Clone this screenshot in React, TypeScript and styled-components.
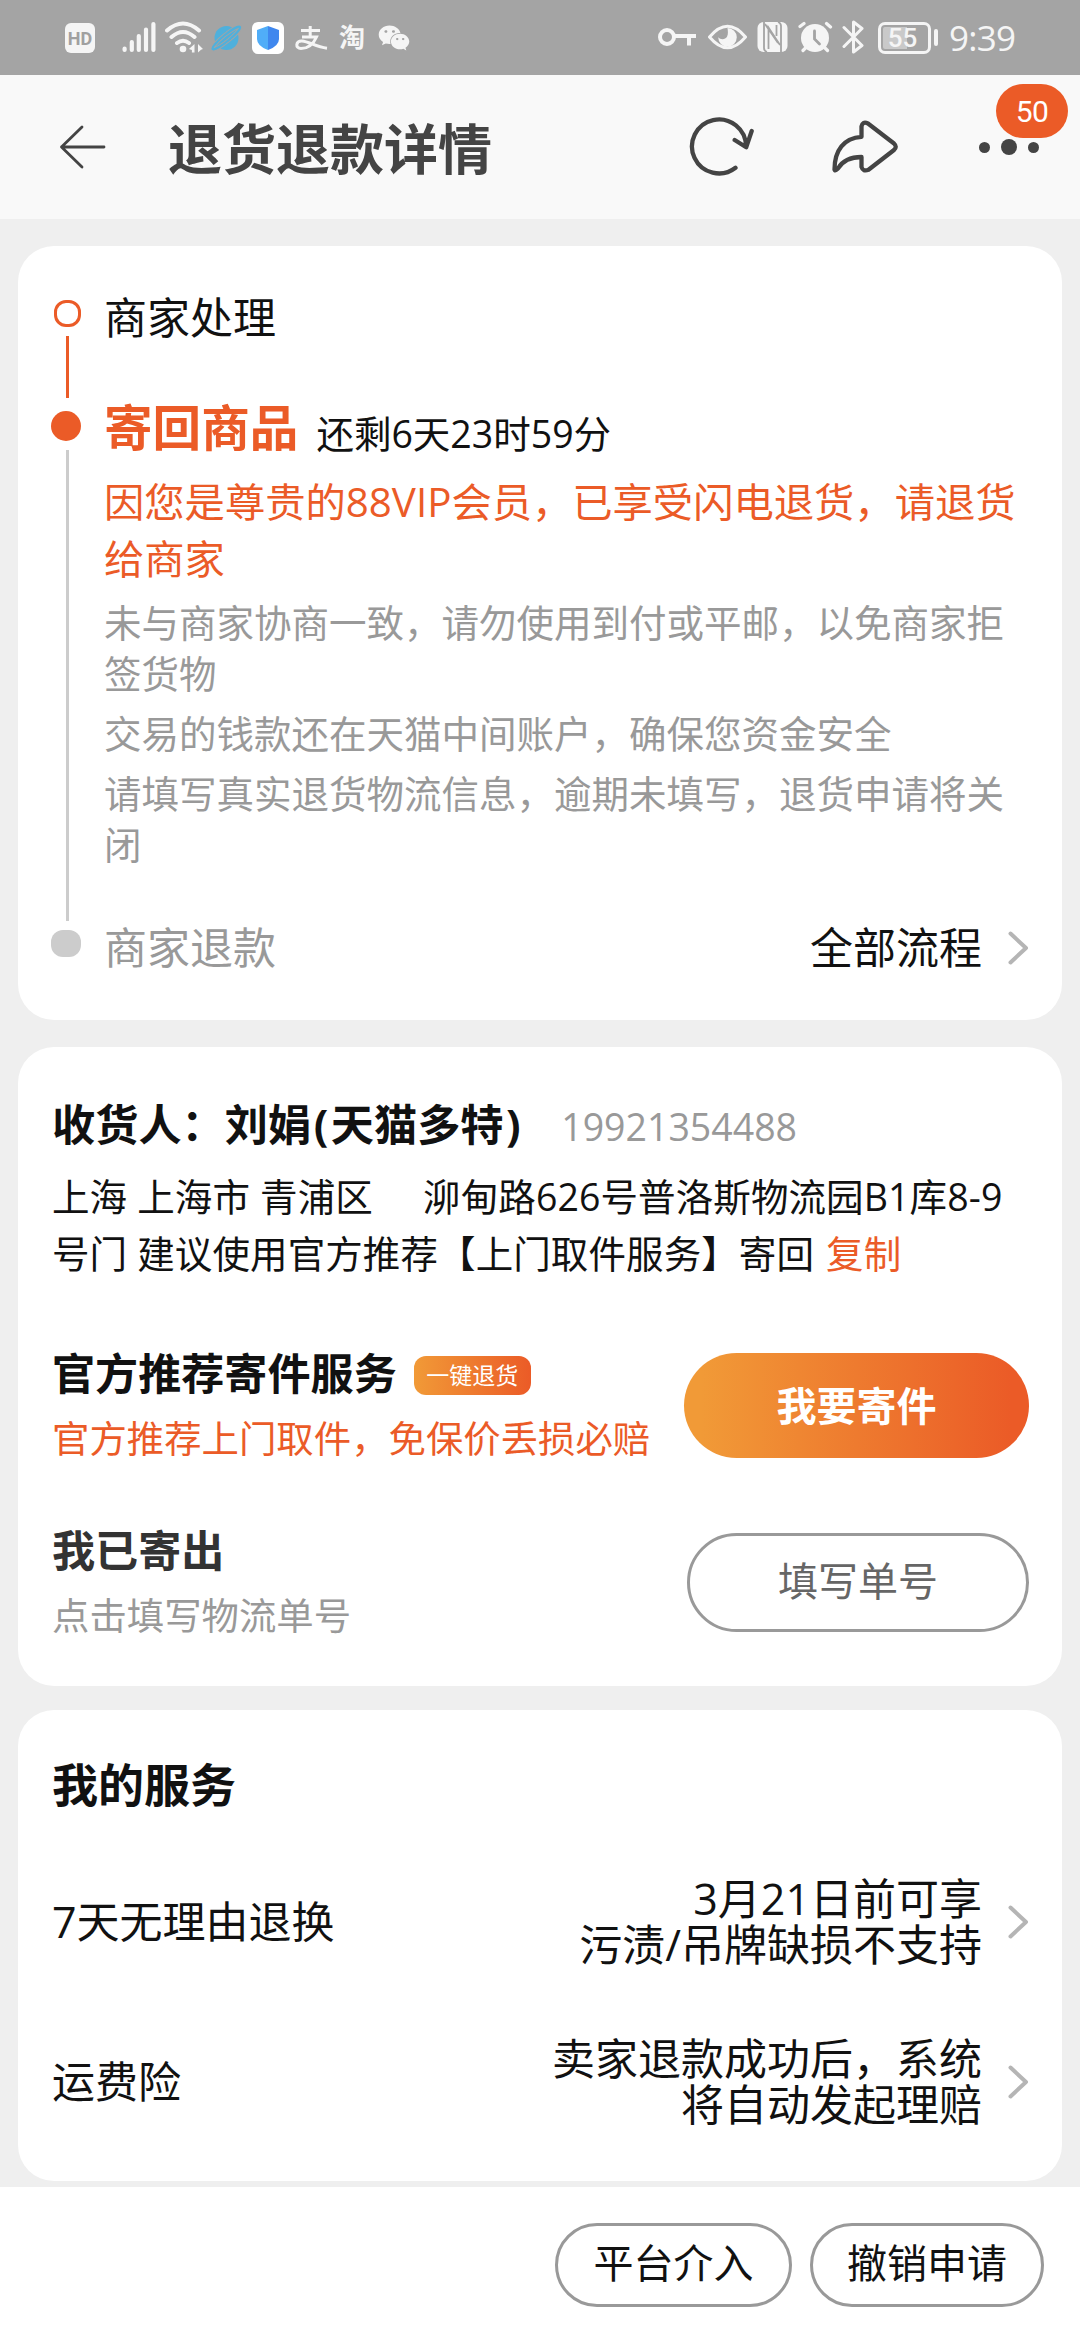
import React from "react";
import styled, { createGlobalStyle } from "styled-components";
import { FaWeixin } from "react-icons/fa";

const ORANGE = "#eb5b27";
const INK = "#111";
const MUTED = "#999";
const STATUS = "#f5f5f5";

const GlobalStyle = createGlobalStyle`
  * { box-sizing: border-box; }
  body { margin: 0; background: #efefef; }
  button { font: inherit; padding: 0; cursor: pointer; }
  p, h1, h2 { margin: 0; font-weight: 400; }
`;

const Screen = styled.div`
  width: 1080px;
  height: 2340px;
  display: flex;
  flex-direction: column;
  overflow: hidden;
  background: #efefef;
  color: ${INK};
  font-family: "Open Sans", "Noto Sans CJK SC", sans-serif;
`;

/* ---------- status bar ---------- */

const StatusBar = styled.header`
  height: 75px;
  flex: none;
  display: flex;
  justify-content: space-between;
  padding: 0 64px 0 65px;
  background: #a4a4a4;
  color: ${STATUS};
`;

const StatusGroup = styled.div`
  display: flex;
  align-items: center;
`;

const StatusIcon = styled.svg<{ $gap?: number }>`
  display: block;
  flex: none;
  height: 75px;
  margin-left: ${(p) => p.$gap ?? 0}px;
`;

const HdChip = styled.span`
  width: 30px;
  height: 30px;
  border-radius: 6px;
  background: ${STATUS};
  color: #a0a0a0;
  font: 700 18px/31px Roboto, sans-serif;
  text-align: center;
`;

const TaoMark = styled.span`
  margin-left: 11px;
  font-size: 26px;
  line-height: 75px;
  font-weight: 700;
`;

const WechatMark = styled(FaWeixin)`
  margin-left: 13px;
  width: 32px;
  height: 32px;
`;

const Battery = styled.span`
  width: 53px;
  height: 32px;
  margin-left: 13px;
  border: 3px solid ${STATUS};
  border-radius: 7px;
  padding: 2px;
  display: flex;
`;

const BatteryFill = styled.span`
  width: 100%;
  border-radius: 2px;
  background: linear-gradient(90deg, #c9c9c9 55%, transparent 55%);
  font: 500 26px/23px Roboto, sans-serif;
  text-align: center;
  padding-right: 4px;
`;

const BatteryTip = styled.span`
  width: 4px;
  height: 17px;
  margin-left: 3px;
  border-radius: 2px;
  background: ${STATUS};
`;

const Clock = styled.span`
  margin-left: 11px;
  width: 67px;
  font-size: 35px;
  line-height: 75px;
  font-weight: 500;
  letter-spacing: -0.7px;
  white-space: nowrap;
`;

/* ---------- title bar ---------- */

const TitleBar = styled.nav`
  height: 144px;
  flex: none;
  display: flex;
  align-items: center;
  padding: 0 39px 0 58px;
  background: #f9f9f9;
  color: #444;
`;

const Title = styled.h1`
  flex: 1;
  margin: 3px 0 0 60px;
  font-size: 54px;
  line-height: 72px;
  font-weight: 700;
`;

const BarIcon = styled.svg<{ $gap?: number }>`
  display: block;
  flex: none;
  margin-right: ${(p) => p.$gap ?? 0}px;
`;

const MenuButton = styled.div`
  position: relative;
  display: flex;
  align-items: center;
  gap: 11px;
  width: 62px;
`;

const Dot = styled.i<{ $size: number }>`
  width: ${(p) => p.$size}px;
  height: ${(p) => p.$size}px;
  border-radius: 50%;
  background: #444;
`;

const Badge = styled.span`
  position: absolute;
  left: 17px;
  bottom: 17px;
  width: 72px;
  height: 54px;
  border-radius: 27px;
  background: ${ORANGE};
  color: #fff;
  font: 400 30px/56px Roboto, sans-serif;
  letter-spacing: -0.5px;
  text-align: center;
`;

/* ---------- cards ---------- */

const Content = styled.main`
  flex: none;
  height: 1968px;
  padding: 27px 18px 0;
  display: flex;
  flex-direction: column;
`;

const Card = styled.section<{ $pad: string; $gap: number }>`
  flex: none;
  margin-bottom: ${(p) => p.$gap}px;
  padding: ${(p) => p.$pad};
  border-radius: 36px;
  background: #fff;
`;

const Step = styled.div<{ $height: number }>`
  display: flex;
  height: ${(p) => p.$height}px;
`;

const Rail = styled.div<{ $top: number }>`
  width: 30px;
  margin-right: 23px;
  flex: none;
  display: flex;
  flex-direction: column;
  align-items: center;
  padding-top: ${(p) => p.$top}px;
`;

const OpenDot = styled.i`
  width: 27px;
  height: 27px;
  margin-left: 3px;
  border: 3px solid ${ORANGE};
  border-radius: 12px;
`;

const SolidDot = styled.i<{ $height: number; $color: string; $radius: number }>`
  width: 30px;
  height: ${(p) => p.$height}px;
  border-radius: ${(p) => p.$radius}px;
  background: ${(p) => p.$color};
`;

const RailLine = styled.i<{ $color: string }>`
  flex: 1;
  width: 3px;
  margin: 9px 0 0 3px;
  background: ${(p) => p.$color};
`;

const StepBody = styled.div`
  flex: 1;
  min-width: 0;
`;

const StepName = styled.p<{ $line: number; $muted?: boolean }>`
  font-size: 43px;
  line-height: ${(p) => p.$line}px;
  color: ${(p) => (p.$muted ? MUTED : INK)};
`;

const StepHead = styled.div`
  display: flex;
  height: 58px;
  gap: 18px;
`;

const StepTitle = styled.h2`
  font-size: 48.6px;
  line-height: 58px;
  font-weight: 700;
  color: ${ORANGE};
`;

const Remaining = styled.span`
  padding-top: 7px;
  font-size: 37.5px;
  line-height: 58px;
`;

const Notice = styled.p`
  margin-top: 17px;
  font-size: 40.3px;
  line-height: 57px;
  color: ${ORANGE};
`;

const Hint = styled.p<{ $gap: number }>`
  margin-top: ${(p) => p.$gap}px;
  font-size: 37.5px;
  line-height: 51px;
  color: ${MUTED};
`;

const MoreLink = styled.a`
  display: flex;
  align-items: center;
  gap: 26px;
  height: 54px;
  font-size: 43px;
  line-height: 54px;
`;

const Recipient = styled.div`
  display: flex;
  align-items: baseline;
  gap: 38px;
  height: 60px;
  line-height: 60px;
`;

const RecipientName = styled.strong`
  font-size: 43.2px;
  font-weight: 700;
`;

const Paren = styled.span`
  padding: 0 2.5px;
`;

const Phone = styled.span`
  font-size: 37.5px;
  color: ${MUTED};
`;

const Address = styled.p`
  margin-top: 13px;
  font-size: 37.5px;
  line-height: 57px;
  letter-spacing: 0.1px;
  word-spacing: 0.2px;
  white-space: pre-wrap;
`;

const CopyLink = styled.a`
  margin-left: 12px;
  color: ${ORANGE};
`;

const ShipRow = styled.div<{ $gap: number }>`
  display: flex;
  align-items: center;
  justify-content: space-between;
  height: 105px;
  margin-top: ${(p) => p.$gap}px;
`;

const ShipTitle = styled.div<{ $color: string }>`
  display: flex;
  align-items: center;
  gap: 17px;
  height: 42px;
  font-size: 43.1px;
  line-height: 42px;
  font-weight: 700;
  color: ${(p) => p.$color};
`;

const Tag = styled.span`
  width: 117px;
  height: 39px;
  margin-top: 2px;
  border-radius: 12px;
  background: linear-gradient(90deg, #f19a37, ${ORANGE});
  color: #fff;
  font-size: 23px;
  line-height: 39px;
  font-weight: 400;
  text-align: center;
`;

const ShipNote = styled.p<{ $color: string }>`
  margin-top: 24px;
  font-size: 37.4px;
  line-height: 39px;
  color: ${(p) => p.$color};
`;

const PrimaryButton = styled.button`
  width: 345px;
  height: 105px;
  border: 0;
  border-radius: 53px;
  background: linear-gradient(90deg, #f19a37 5%, ${ORANGE} 95%);
  color: #fff;
  font-size: 40px;
  line-height: 104px;
  font-weight: 700;
`;

const OutlineButton = styled.button<{ $width: number; $height: number; $color: string }>`
  width: ${(p) => p.$width}px;
  height: ${(p) => p.$height}px;
  border: 3px solid ${MUTED};
  border-radius: ${(p) => p.$height / 2}px;
  background: #fff;
  color: ${(p) => p.$color};
  font-size: 40px;
  line-height: ${(p) => p.$height - 10}px;
`;

const ButtonLabel = styled.span`
  display: block;
  margin-top: -4px;
`;

const SectionTitle = styled.h2`
  font-size: 46px;
  line-height: 60px;
  font-weight: 700;
`;

const ServiceRow = styled.div<{ $gap: number }>`
  display: flex;
  align-items: center;
  height: 91px;
  margin-top: ${(p) => p.$gap}px;
  font-size: 43px;
  line-height: 45.5px;
`;

const ServiceText = styled.span`
  flex: 1;
  margin-right: 26px;
  text-align: right;
`;

const Footer = styled.footer`
  flex: 1;
  display: flex;
  justify-content: flex-end;
  gap: 18px;
  padding: 36px 36px 0;
  background: #fff;
`;

/* ---------- pieces ---------- */

function Chevron() {
  return (
    <svg width="21" height="34" viewBox="0 0 21 34" fill="none" stroke="#b5b5b5" strokeWidth="4" strokeLinecap="round" strokeLinejoin="round">
      <path d="M2.5 2.5 18 17 2.5 31.5" />
    </svg>
  );
}

function StatusLeft() {
  return (
    <StatusGroup>
      <HdChip>HD</HdChip>
      <StatusIcon $gap={27} width="34" viewBox="122 0 34 75" stroke={STATUS} strokeWidth="4.2" strokeLinecap="round">
        <path d="M124.6 48.5V50M131.8 42V50M138.8 36V50M146 29.5V50M153.4 24V50" />
      </StatusIcon>
      <StatusIcon $gap={9} width="38" viewBox="165 0 38 75" fill="none" stroke={STATUS} strokeWidth="4" strokeLinecap="round">
        <path d="M167 30.5Q183 16.5 199 30.5M171.5 37Q183 27 194.5 37M177 43Q183 38.5 189 43" />
        <circle cx="183" cy="49" r="3.3" fill={STATUS} stroke="none" />
        <path d="M194.5 44v8.5h-2.6v-2.6l-3-.9zM198 52.5V44l5 5-2 .8z" fill={STATUS} stroke="none" />
      </StatusIcon>
      <StatusIcon $gap={8} width="31" viewBox="211 0 31 75">
        <circle cx="226.5" cy="38" r="12" fill="#4fb0dc" />
        <ellipse cx="226.3" cy="38" rx="17.5" ry="3.2" transform="rotate(-39 226.3 38)" fill="#4fb0dc" stroke="#a4a4a4" strokeWidth="4" />
        <ellipse cx="226.3" cy="38" rx="17.5" ry="3.2" transform="rotate(-39 226.3 38)" fill="none" stroke="#4fb0dc" strokeWidth="2.2" />
      </StatusIcon>
      <StatusIcon $gap={10} width="32" viewBox="252 0 32 75">
        <rect x="252" y="22" width="32" height="32" rx="6" fill="#fff" />
        <path d="M268 26 257 30v9q0 7 11 11z" fill="#50adf8" />
        <path d="M268 26 279 30v9q0 7-11 11z" fill="#3f87ee" />
      </StatusIcon>
      <StatusIcon $gap={11} width="33" viewBox="295 0 33 75" fill="none" stroke={STATUS} strokeWidth="3">
        <path d="M301 30.5h19M310.2 26v10.5M302 37h14.5C313 45 307 48.5 301 48.5c-6 0-5.5-8 1-7.5 7 .5 14 6 25 7.2" />
      </StatusIcon>
      <TaoMark>淘</TaoMark>
      <WechatMark />
    </StatusGroup>
  );
}

function StatusRight() {
  return (
    <StatusGroup>
      <StatusIcon width="39" viewBox="658 0 39 75" fill="none" stroke={STATUS} strokeWidth="4">
        <circle cx="667" cy="37" r="7" />
        <path d="M674 36h22M689 36v9.5" />
      </StatusIcon>
      <StatusIcon $gap={11} width="39" viewBox="708 0 39 75" fill="none" stroke={STATUS} strokeWidth="3">
        <path d="M709.5 37Q727.5 15.5 745.5 37 727.5 58.5 709.5 37z" />
        <path d="M727.5 28a9.3 9.3 0 1 1-9.3 9.3c2 2.5 7 2.7 8.8-.5 1.5-3 .8-6.5.5-8.8z" fill={STATUS} stroke="none" />
      </StatusIcon>
      <StatusIcon $gap={10} width="31" viewBox="757 0 31 75">
        <rect x="757.5" y="22" width="30" height="30" rx="6" fill={STATUS} />
        <path d="M764 22v26q0 3 3 4M781 52V26q0-3-3-4" fill="none" stroke="#a4a4a4" strokeWidth="1.8" />
        <path d="M768.5 49V27.5L780 45M765 24l13 19M776.5 25v11" fill="none" stroke="#a4a4a4" strokeWidth="1.8" />
      </StatusIcon>
      <StatusIcon $gap={10} width="35" viewBox="798 0 35 75" fill="none" stroke={STATUS} strokeLinecap="round">
        <circle cx="815" cy="38" r="14" fill={STATUS} stroke="none" />
        <path d="M800 26.5 804 23.5M826.5 23.5l4 3.5M803 50.5l2.5-2.5M827.5 50.5 825 48" strokeWidth="3.2" />
        <path d="M814.5 31v8l5 5" stroke="#a4a4a4" strokeWidth="2.8" />
      </StatusIcon>
      <StatusIcon $gap={9} width="23" viewBox="842 0 23 75" fill="none" stroke={STATUS} strokeWidth="3" strokeLinecap="round" strokeLinejoin="round">
        <path d="m844 27.500 18 18-8.500 6.500V22l8.500 6.500-18 18" />
      </StatusIcon>
      <Battery>
        <BatteryFill>55</BatteryFill>
      </Battery>
      <BatteryTip />
      <Clock>9:39</Clock>
    </StatusGroup>
  );
}

export default function App() {
  return (
    <>
      <GlobalStyle />
      <Screen>
        <StatusBar>
          <StatusLeft />
          <StatusRight />
        </StatusBar>

        <TitleBar>
          <BarIcon width="50" height="50" viewBox="58 122 50 50" fill="none" stroke="#444" strokeWidth="2.8" strokeLinecap="round" strokeLinejoin="round">
            <path d="M104 147H61.5M82 127 61.5 147 82 167" />
          </BarIcon>
          <Title>退货退款详情</Title>
          <BarIcon $gap={76} width="68" height="64" viewBox="686 115 68 64" fill="none" stroke="#444" strokeWidth="4.3" strokeLinecap="round" strokeLinejoin="round">
            <path d="M734.5 167.8A27 27 0 1 1 745 146.5M733.7 140 745.2 147.3 750.7 131" />
          </BarIcon>
          <BarIcon $gap={78} width="70" height="64" viewBox="830 115 70 64" fill="none" stroke="#444" strokeWidth="4.3" strokeLinecap="round" strokeLinejoin="round">
            <path d="M833.5 169.5C833.5 150 843 138 860.5 136.8V126.5Q861.5 121 867 123.5L893 143.5Q896.5 146.7 893 150L867.5 169.8Q862 172 860.5 167V157C850 157 842 160 837 168.5Q833.8 171.5 833.5 169.5Z" />
          </BarIcon>
          <MenuButton>
            <Dot $size={11} />
            <Dot $size={16} />
            <Dot $size={11} />
            <Badge>50</Badge>
          </MenuButton>
        </TitleBar>

        <Content>
          <Card $pad="42px 33px 45px" $gap={27}>
            <Step $height={110}>
              <Rail $top={12}>
                <OpenDot />
                <RailLine $color={ORANGE} />
              </Rail>
              <StepName $line={60}>商家处理</StepName>
            </Step>
            <Step $height={523}>
              <Rail $top={13}>
                <SolidDot $height={30} $color={ORANGE} $radius={15} />
                <RailLine $color="#ccc" />
              </Rail>
              <StepBody>
                <StepHead>
                  <StepTitle>寄回商品</StepTitle>
                  <Remaining>还剩6天23时59分</Remaining>
                </StepHead>
                <Notice>因您是尊贵的88VIP会员，已享受闪电退货，请退货给商家</Notice>
                <Hint $gap={10}>未与商家协商一致，请勿使用到付或平邮，以免商家拒签货物</Hint>
                <Hint $gap={9}>交易的钱款还在天猫中间账户，确保您资金安全</Hint>
                <Hint $gap={9}>请填写真实退货物流信息，逾期未填写，退货申请将关闭</Hint>
              </StepBody>
            </Step>
            <Step $height={54}>
              <Rail $top={9}>
                <SolidDot $height={27} $color="#ccc" $radius={12} />
              </Rail>
              <StepBody>
                <StepName $line={54} $muted>商家退款</StepName>
              </StepBody>
              <MoreLink>
                全部流程
                <Chevron />
              </MoreLink>
            </Step>
          </Card>

          <Card $pad="48px 33px 51px 34px" $gap={24}>
            <Recipient>
              <RecipientName>
                收货人：刘娟<Paren>(</Paren>天猫多特<Paren>)</Paren>
              </RecipientName>
              <Phone>19921354488</Phone>
            </Recipient>
            <Address>
              {"上海 上海市 青浦区     泖甸路626号普洛斯物流园B1库8-9号门 建议使用官方推荐【上门取件服务】寄回"}
              <CopyLink>复制</CopyLink>
            </Address>
            <ShipRow $gap={71}>
              <div>
                <ShipTitle $color={INK}>
                  官方推荐寄件服务
                  <Tag>一键退货</Tag>
                </ShipTitle>
                <ShipNote $color={ORANGE}>官方推荐上门取件，免保价丢损必赔</ShipNote>
              </div>
              <PrimaryButton>我要寄件</PrimaryButton>
            </ShipRow>
            <ShipRow $gap={72}>
              <div>
                <ShipTitle $color="#333">我已寄出</ShipTitle>
                <ShipNote $color={MUTED}>点击填写物流单号</ShipNote>
              </div>
              <OutlineButton $width={342} $height={99} $color="#666">
                <ButtonLabel>填写单号</ButtonLabel>
              </OutlineButton>
            </ShipRow>
          </Card>

          <Card $pad="44px 33px 54px 34px" $gap={6}>
            <SectionTitle>我的服务</SectionTitle>
            <ServiceRow $gap={62}>
              <span>7天无理由退换</span>
              <ServiceText>
                3月21日前可享
                <br />
                污渍/吊牌缺损不支持
              </ServiceText>
              <Chevron />
            </ServiceRow>
            <ServiceRow $gap={69}>
              <span>运费险</span>
              <ServiceText>
                卖家退款成功后，系统
                <br />
                将自动发起理赔
              </ServiceText>
              <Chevron />
            </ServiceRow>
          </Card>
        </Content>

        <Footer>
          <OutlineButton $width={237} $height={84} $color={INK}>
            <ButtonLabel>平台介入</ButtonLabel>
          </OutlineButton>
          <OutlineButton $width={234} $height={84} $color={INK}>
            <ButtonLabel>撤销申请</ButtonLabel>
          </OutlineButton>
        </Footer>
      </Screen>
    </>
  );
}
